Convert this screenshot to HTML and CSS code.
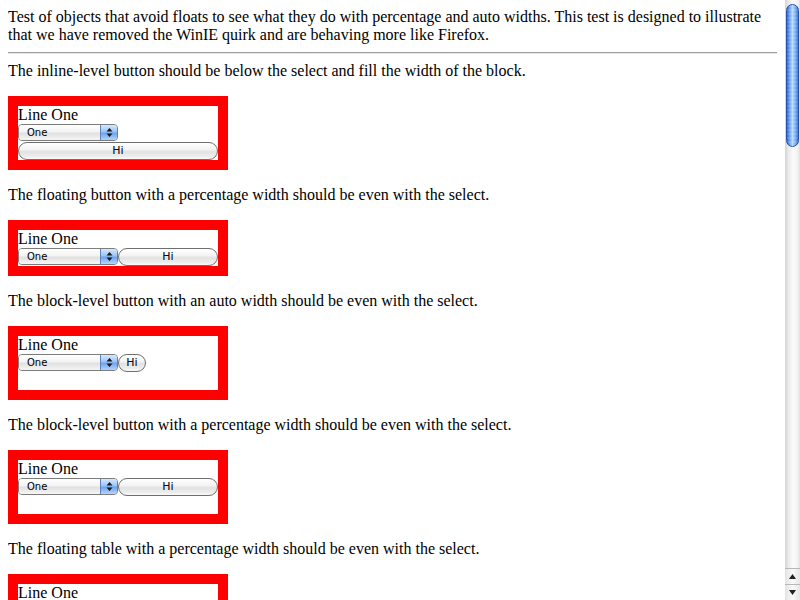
FILE: index.html
```html
<!DOCTYPE html>
<html>
<head>
<meta charset="utf-8">
<title>Objects avoiding floats</title>
<link rel="stylesheet" href="styles.css">
</head>
<body>
<div class="intro">Test of objects that avoid floats to see what they do with percentage and auto widths. This test is designed to illustrate that we have removed the WinIE quirk and are behaving more like Firefox.</div>
<hr class="rule">

<div class="caption">The inline-level button should be below the select and fill the width of the block.</div>
<div class="box">
  <div class="line">Line One</div>
  <div class="row">
    <span class="select"><span class="sel-text">One</span><span class="sel-arrow"><svg width="7" height="11" viewBox="0 0 7 11"><path d="M3.5 1 L6.5 4.5 L0.5 4.5 Z M3.5 10 L6.5 6.5 L0.5 6.5 Z" fill="#1a1a1a"/></svg></span></span>
  </div>
  <div class="row"><span class="btn w-full">Hi</span></div>
</div>

<div class="caption">The floating button with a percentage width should be even with the select.</div>
<div class="box">
  <div class="line">Line One</div>
  <div class="row">
    <span class="select"><span class="sel-text">One</span><span class="sel-arrow"><svg width="7" height="11" viewBox="0 0 7 11"><path d="M3.5 1 L6.5 4.5 L0.5 4.5 Z M3.5 10 L6.5 6.5 L0.5 6.5 Z" fill="#1a1a1a"/></svg></span></span><span class="btn w-half">Hi</span>
  </div>
</div>

<div class="caption">The block-level button with an auto width should be even with the select.</div>
<div class="box">
  <div class="line">Line One</div>
  <div class="row">
    <span class="select"><span class="sel-text">One</span><span class="sel-arrow"><svg width="7" height="11" viewBox="0 0 7 11"><path d="M3.5 1 L6.5 4.5 L0.5 4.5 Z M3.5 10 L6.5 6.5 L0.5 6.5 Z" fill="#1a1a1a"/></svg></span></span><span class="btn w-auto">Hi</span>
  </div>
  <div class="row"></div>
</div>

<div class="caption">The block-level button with a percentage width should be even with the select.</div>
<div class="box">
  <div class="line">Line One</div>
  <div class="row">
    <span class="select"><span class="sel-text">One</span><span class="sel-arrow"><svg width="7" height="11" viewBox="0 0 7 11"><path d="M3.5 1 L6.5 4.5 L0.5 4.5 Z M3.5 10 L6.5 6.5 L0.5 6.5 Z" fill="#1a1a1a"/></svg></span></span><span class="btn w-half">Hi</span>
  </div>
  <div class="row"></div>
</div>

<div class="caption">The floating table with a percentage width should be even with the select.</div>
<div class="box">
  <div class="line">Line One</div>
  <div class="row">
    <span class="select"><span class="sel-text">One</span><span class="sel-arrow"><svg width="7" height="11" viewBox="0 0 7 11"><path d="M3.5 1 L6.5 4.5 L0.5 4.5 Z M3.5 10 L6.5 6.5 L0.5 6.5 Z" fill="#1a1a1a"/></svg></span></span>
  </div>
  <div class="row"></div>
</div>

<div class="scrollbar">
  <div class="track"><div class="thumb"></div></div>
  <div class="arrow up"><svg width="7" height="5" viewBox="0 0 7 5"><path d="M3.5 0 L7 5 L0 5 Z" fill="#222"/></svg></div>
  <div class="arrow down"><svg width="7" height="5" viewBox="0 0 7 5"><path d="M0 0 L7 0 L3.5 5 Z" fill="#222"/></svg></div>
</div>
</body>
</html>
```
FILE: styles.css
```css
html {
  overflow: hidden;
  background: #ffffff;
}

body {
  margin: 8px 23px 8px 8px;
  font-family: "Liberation Serif", "Times New Roman", serif;
  font-size: 16px;
  line-height: 18px;
  color: #000000;
}

.rule {
  margin: 8px 0;
  height: 0;
  border: 0;
  border-top: 1px solid #a0a0a0;
  border-bottom: 1px solid #e6e6e6;
}

.box {
  width: 200px;
  border: 10px solid #ff0000;
  margin: 16px 0;
}

.line {
  height: 18px;
}

.row {
  display: flex;
  align-items: flex-start;
  height: 18px;
}

.select {
  display: inline-flex;
  width: 100px;
  height: 17px;
  box-sizing: border-box;
  border: 1px solid #7c7c7c;
  border-radius: 4px;
  overflow: hidden;
  font-family: "DejaVu Sans", "Liberation Sans", sans-serif;
  font-size: 10px;
  flex-shrink: 0;
}

.sel-text {
  flex: 1;
  padding-left: 8px;
  line-height: 15px;
  background: linear-gradient(#ffffff 0%, #f3f3f3 45%, #e0e0e0 55%, #f6f6f6 100%);
}

.sel-arrow {
  width: 16px;
  display: flex;
  align-items: center;
  justify-content: center;
  border-left: 1px solid #5d83c4;
  background: linear-gradient(#d6e8fd 0%, #9cc4f6 45%, #6ea3ee 55%, #b3d6fb 100%);
}

.btn {
  display: inline-flex;
  align-items: center;
  justify-content: center;
  height: 18px;
  box-sizing: border-box;
  border: 1px solid #6e6e6e;
  border-radius: 9px;
  background: linear-gradient(#ffffff 0%, #f4f4f4 40%, #e2e2e2 55%, #eeeeee 85%, #fafafa 100%);
  font-family: "DejaVu Sans", "Liberation Sans", sans-serif;
  font-size: 11px;
  color: #000;
  flex-shrink: 0;
}

.w-full {
  width: 200px;
}

.w-half {
  width: 100px;
}

.w-auto {
  width: 28px;
}

.scrollbar {
  position: fixed;
  top: 0;
  right: 0;
  width: 15px;
  height: 600px;
  display: flex;
  flex-direction: column;
  background: linear-gradient(to right, #d4d4d4 0%, #ececec 25%, #fbfbfb 55%, #f2f2f2 85%, #dedede 100%);
}

.track {
  flex: 1;
  padding: 4px 1px 0 1px;
}

.thumb {
  height: 143px;
  border-radius: 7px;
  box-sizing: border-box;
  border: 1px solid #2452b0;
  background:
    repeating-linear-gradient(rgba(255,255,255,0.12) 0 2px, rgba(255,255,255,0) 2px 4px),
    linear-gradient(to right, #2b62cf 0%, #6fa6f2 25%, #b9dafc 50%, #7fb2f4 75%, #3a70d6 100%);
}

.arrow {
  height: 16px;
  display: flex;
  align-items: center;
  justify-content: center;
  border-top: 1px solid #b8b8b8;
  box-sizing: border-box;
  background: linear-gradient(to right, #e2e2e2, #fafafa 50%, #e6e6e6);
}
```
